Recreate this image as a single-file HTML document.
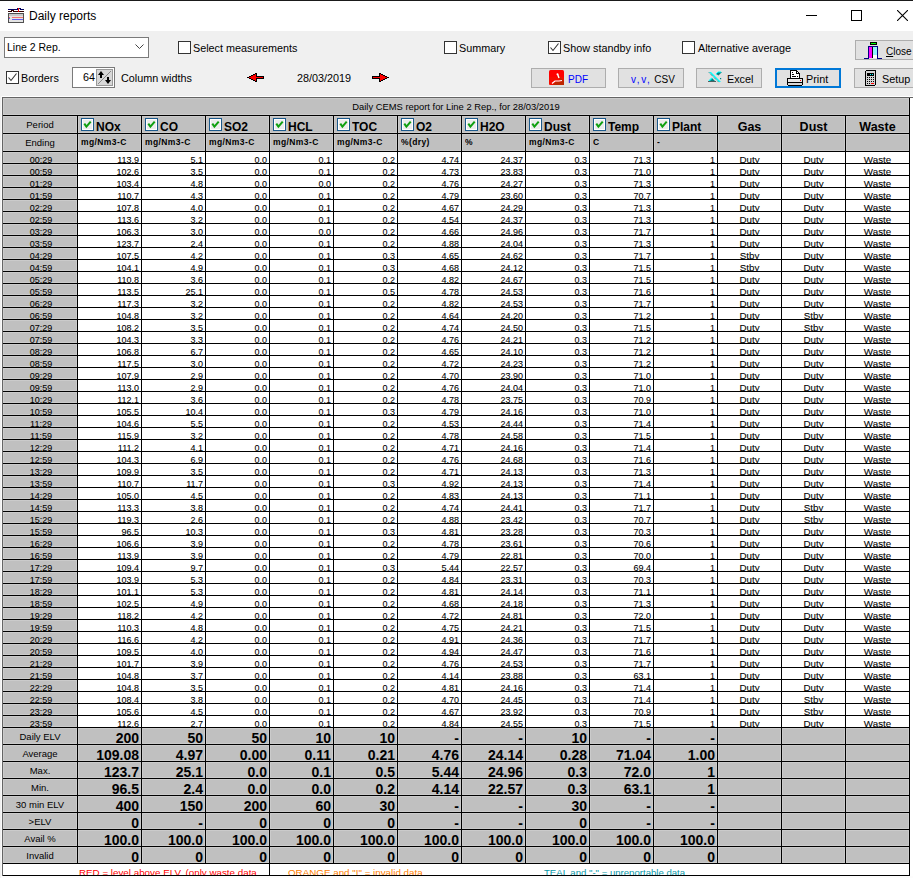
<!DOCTYPE html>
<html><head><meta charset="utf-8"><style>
*{margin:0;padding:0;box-sizing:border-box}
html,body{width:913px;height:878px;overflow:hidden;background:#f0f0f0;font-family:"Liberation Sans",sans-serif;color:#000}
body{position:relative}
svg{display:block}
body>div{position:absolute}
.g{background:#c0c0c0;box-shadow:inset 0 0 0 1px #cbcbcb}
.g2{background:#c0c0c0}
.k{background:#000}
.t{white-space:nowrap;overflow:hidden}
.tt{font-size:9.4px;line-height:18.5px;color:#000}
.hl{font-size:9.5px;line-height:17.2px}
.hb{font-size:12px;font-weight:bold;line-height:22.5px}
.hb2{font-size:12.5px;font-weight:bold;line-height:22.5px}
.un{font-size:8.5px;font-weight:bold;line-height:16.5px;letter-spacing:.4px}
.dr{left:0;width:913px;height:11px;overflow:hidden}
.dr i{position:absolute;top:0;font-style:normal;font-size:9px;line-height:17.6px;white-space:nowrap;-webkit-text-stroke:.08px #000}
.dr i.c{font-size:9.8px;line-height:16.2px}
.sr{left:0;width:913px;height:16px;overflow:hidden}
.sr i{position:absolute;top:0;font-style:normal;white-space:nowrap}
.sr .sl{font-size:9.5px;line-height:18px}
.sr .sv{font-size:14px;font-weight:bold;line-height:20.3px}
.lg{left:0;width:913px;height:11px;overflow:hidden}
.lg i{position:absolute;top:0;font-style:normal;font-size:9.8px;line-height:17px;white-space:nowrap}
.ui{font-size:10.8px;white-space:nowrap}
.btn{background:#e1e1e1;border:1px solid #adadad}

</style></head><body>
<div style="left:0;top:0;width:913px;height:31px;background:#fff"></div>
<div style="left:0;top:0;width:913px;height:1px;background:#1a1a1a"></div>
<!-- app icon -->
<div style="left:8px;top:8px;width:16px;height:15px"><svg width="16" height="15" viewBox="0 0 16 15" shape-rendering="crispEdges"><path d="M0 1.5 H9 V0.5 H12 V1.5 H16" stroke="#000060" fill="none"/><path d="M0 3.5 H3 V2.5 H5 V3.5 H16" stroke="#300000" fill="none"/><rect x="10" y="0" width="1" height="4" fill="#f00"/><rect x="0.5" y="5.5" width="15" height="9" fill="#e4e4e4" stroke="#505050"/><rect x="1" y="6" width="14" height="2" fill="#c8c8c8"/><rect x="4" y="9" width="11" height="1" fill="#f07070"/><rect x="4" y="11" width="11" height="1" fill="#6060f0"/><rect x="1" y="9" width="1" height="1" fill="#f06060"/><rect x="1" y="10" width="1" height="1" fill="#6060f0"/></svg></div>
<div class="ui" style="left:29px;top:9px;font-size:12px;line-height:15px;color:#000">Daily reports</div>
<!-- window buttons -->
<div style="left:806px;top:15px;width:11px;height:1px;background:#000"></div>
<div style="left:851px;top:10px;width:11px;height:11px;border:1px solid #000"></div>
<div style="left:897px;top:10px;width:11px;height:11px"><svg width="11" height="11"><path d="M0 0 L11 11 M11 0 L0 11" stroke="#000" stroke-width="1.1"/></svg></div>
<!-- combo -->
<div style="left:4px;top:37px;width:145px;height:21px;background:#fff;border:1px solid #7a7a7a"></div>
<div class="ui" style="left:7px;top:40px;line-height:15px;font-size:10.5px">Line 2 Rep.</div>
<div style="left:135px;top:44px;width:10px;height:6px"><svg width="10" height="6"><path d="M0.5 0.5 L4.5 4.5 L8.5 0.5" stroke="#444" fill="none"/></svg></div>
<!-- checkboxes row 1 -->
<div style="left:178px;top:41px;width:13px;height:13px;background:#fff;border:1px solid #333"></div>
<div class="ui" style="left:193px;top:41px;line-height:15px">Select measurements</div>
<div style="left:444px;top:41px;width:13px;height:13px;background:#fff;border:1px solid #333"></div>
<div class="ui" style="left:459px;top:41px;line-height:15px">Summary</div>
<div style="left:548px;top:41px;width:13px;height:13px;background:#fff;border:1px solid #333"><svg width="11" height="11" style="position:absolute;left:0;top:0"><path d="M1.5 5.5 L4 8.5 L9.5 1.5" stroke="#333" stroke-width="1.1" fill="none"/></svg></div>
<div class="ui" style="left:563px;top:41px;line-height:15px">Show standby info</div>
<div style="left:682px;top:41px;width:13px;height:13px;background:#fff;border:1px solid #333"></div>
<div class="ui" style="left:698px;top:41px;line-height:15px">Alternative average</div>
<!-- close button -->
<div class="btn" style="left:855px;top:40px;width:70px;height:20px"></div>
<div style="left:864px;top:42px;width:18px;height:17px"><svg width="18" height="17" viewBox="0 0 18 17" shape-rendering="crispEdges"><rect x="6.5" y="0.5" width="6" height="2" fill="#0f0" stroke="#000"/><rect x="5" y="5" width="3" height="11" fill="#ff00ff"/><rect x="8" y="5" width="1" height="11" fill="#000"/><rect x="9" y="5" width="4" height="11" fill="#fff"/><rect x="9" y="5" width="4" height="8" fill="#90f4ff"/><path d="M0 16.5 H4.5 V4.5 H13.5 V16.5 H18" stroke="#000080" fill="none"/></svg></div>
<div class="ui" style="left:886px;top:44px;line-height:15px;font-size:10px"><u>C</u>lose</div>
<!-- row 2 -->
<div style="left:6px;top:71px;width:13px;height:13px;background:#fff;border:1px solid #333"><svg width="11" height="11" style="position:absolute;left:0;top:0"><path d="M1.5 5.5 L4 8.5 L9.5 1.5" stroke="#333" stroke-width="1.1" fill="none"/></svg></div>
<div class="ui" style="left:21px;top:71px;line-height:15px">Borders</div>
<div style="left:72px;top:67px;width:43px;height:21px;background:#fff;border:1px solid #7a7a7a"></div>
<div class="ui" style="left:80px;top:70px;width:15px;text-align:right;line-height:15px">64</div>
<div style="left:96px;top:69px;width:17px;height:17px;background:#d8d8d8;border:1px solid #999"><svg width="15" height="15" style="position:absolute;left:0;top:0"><path d="M14 1 L1 14" stroke="#888"/><path d="M4 1 L1 5 H3 V8 H5 V5 H7 Z" fill="#000"/><path d="M11 14 L8 10 H10 V7 H12 V10 H14 Z" fill="#000"/></svg></div>
<div class="ui" style="left:121px;top:71px;line-height:15px">Column widths</div>
<div style="left:247px;top:73px;width:17px;height:9px"><svg width="17" height="9" viewBox="0 0 17 9" shape-rendering="crispEdges"><path d="M0 4 H2 V3 H4 V2 H6 V1 H8 V0 H10 V3 H17 V6 H10 V9 H8 V8 H6 V7 H4 V6 H2 V5 H0 Z" fill="#000"/><path d="M2 4 H4 V3 H6 V2 H8 V1 H9 V4 H16 V5 H9 V8 H8 V7 H6 V6 H4 V5 H2 Z" fill="#f00"/></svg></div>
<div class="ui" style="left:297px;top:71px;line-height:15px">28/03/2019</div>
<div style="left:372px;top:73px;width:17px;height:9px"><svg width="17" height="9" viewBox="0 0 17 9" style="transform:scaleX(-1)" shape-rendering="crispEdges"><path d="M0 4 H2 V3 H4 V2 H6 V1 H8 V0 H10 V3 H17 V6 H10 V9 H8 V8 H6 V7 H4 V6 H2 V5 H0 Z" fill="#000"/><path d="M2 4 H4 V3 H6 V2 H8 V1 H9 V4 H16 V5 H9 V8 H8 V7 H6 V6 H4 V5 H2 Z" fill="#f00"/></svg></div>
<!-- buttons row 2 -->
<div class="btn" style="left:531px;top:68px;width:75px;height:20px"></div>
<div style="left:549px;top:70px;width:15px;height:15px"><svg width="15" height="15" viewBox="0 0 15 15"><rect x="0" y="0" width="15" height="15" rx="1.5" fill="#f00"/><path d="M4 15 L7 11.5 H15 V15 Z M8 5 L9 5 L15 11 V11.5 H13 Z" fill="#a82a00"/><path d="M0 7 H15 V15 H0 Z" fill="#e42000" opacity=".35"/><path d="M8.7 4.5 L10 8" stroke="#fff" stroke-width="1.4" fill="none"/><circle cx="8.5" cy="4.2" r="1" fill="#fff"/><path d="M3 13.5 L6 11 H10 L13 10.5" stroke="#fff" stroke-width="1.2" fill="none"/></svg></div>
<div class="ui" style="left:568px;top:72px;line-height:15px;color:#0000ff;font-size:10px">PDF</div>
<div class="btn" style="left:618px;top:68px;width:66px;height:20px"></div>
<div class="ui" style="left:631px;top:72px;line-height:15px;font-size:10px"><span style="color:#0000ff;letter-spacing:1.6px">v,v,</span> CSV</div>
<div class="btn" style="left:696px;top:68px;width:66px;height:20px"></div>
<div style="left:708px;top:71px;width:14px;height:12px"><svg width="14" height="12" viewBox="0 0 14 12"><path d="M1 1 H3 L13 11 H11 Z" fill="#00ffff"/><path d="M1 1.5 L11 11.5" stroke="#007070" stroke-width="1" stroke-dasharray="1 1"/><path d="M8 3 L10 1 H14 L10.5 4.5 Z" fill="#008080"/><path d="M8 3 L10 1 H13" stroke="#00ffff" stroke-width="1" fill="none"/><path d="M1 10 L4 7 L7 10 Z" fill="#008080"/><path d="M1 10 L4 7" stroke="#00ffff" stroke-width="1.2"/><rect x="0" y="10" width="8" height="1" fill="#506060"/><rect x="12" y="7" width="1.2" height="1.2" fill="#008080"/></svg></div>
<div class="ui" style="left:727px;top:72px;line-height:15px">Excel</div>
<div style="left:775px;top:68px;width:66px;height:20px;background:#e1e1e1;border:2px solid #0078d7"></div>
<div style="left:787px;top:70px;width:16px;height:16px"><svg width="16" height="16" viewBox="0 0 16 16" shape-rendering="crispEdges"><path d="M3.5 8.5 V0.5 H9.5 L12.5 3.5 V8.5" fill="#fff" stroke="#000"/><path d="M9.5 0.5 V3.5 H12.5" fill="none" stroke="#000"/><rect x="5" y="2" width="1" height="1"/><rect x="5" y="4" width="2" height="1"/><rect x="5" y="6" width="4" height="1"/><rect x="10" y="6" width="1" height="1"/><rect x="0.5" y="8.5" width="15" height="6" fill="#fff" stroke="#000"/><rect x="1" y="9" width="14" height="3" fill="#e8e8e8"/><rect x="13" y="10" width="1" height="1" fill="#f00"/><rect x="0" y="12" width="16" height="1"/><rect x="1" y="13" width="14" height="2" fill="#d8d8d8"/><rect x="1" y="15" width="14" height="1"/></svg></div>
<div class="ui" style="left:806px;top:72px;line-height:15px">Print</div>
<div class="btn" style="left:854px;top:68px;width:70px;height:20px"></div>
<div style="left:865px;top:70px;width:11px;height:16px"><svg width="11" height="16" viewBox="0 0 11 16" shape-rendering="crispEdges"><rect x="0.5" y="0.5" width="10" height="15" rx="1.5" fill="#d4d4d4" stroke="#000"/><rect x="2" y="3" width="7" height="3"/><rect x="5" y="4" width="1" height="1" fill="#0ff"/><rect x="7" y="4" width="1" height="1" fill="#0ff"/><rect x="2" y="7" width="1" height="1"/><rect x="4" y="7" width="1" height="1"/><rect x="6" y="7" width="1" height="1"/><rect x="8" y="7" width="1" height="1"/><rect x="2" y="9" width="1" height="1"/><rect x="4" y="9" width="1" height="1"/><rect x="6" y="9" width="1" height="1"/><rect x="8" y="9" width="1" height="1"/><rect x="2" y="11" width="1" height="1"/><rect x="4" y="11" width="1" height="1"/><rect x="6" y="11" width="1" height="1"/><rect x="8" y="11" width="1" height="1"/><rect x="2" y="13" width="1" height="1"/><rect x="4" y="13" width="1" height="1"/><rect x="6" y="13" width="3" height="1" fill="#f00"/></svg></div>
<div class="ui" style="left:882px;top:72px;line-height:15px">Setup</div>

<div style="left:1px;top:96px;width:912px;height:1px;background:#fff"></div>
<div style="left:1px;top:96px;width:1px;height:782px;background:#fafafa"></div>
<div style="left:2px;top:97px;width:911px;height:1px;background:#646464"></div>
<div style="left:2px;top:97px;width:1px;height:779px;background:#646464"></div>
<div class="g" style="left:3px;top:98px;width:906px;height:17px"></div>
<div class="g" style="left:3px;top:116px;width:74px;height:17px"></div>
<div class="g" style="left:78px;top:116px;width:63px;height:17px"></div>
<div class="g" style="left:142px;top:116px;width:63px;height:17px"></div>
<div class="g" style="left:206px;top:116px;width:63px;height:17px"></div>
<div class="g" style="left:270px;top:116px;width:63px;height:17px"></div>
<div class="g" style="left:334px;top:116px;width:63px;height:17px"></div>
<div class="g" style="left:398px;top:116px;width:63px;height:17px"></div>
<div class="g" style="left:462px;top:116px;width:63px;height:17px"></div>
<div class="g" style="left:526px;top:116px;width:63px;height:17px"></div>
<div class="g" style="left:590px;top:116px;width:63px;height:17px"></div>
<div class="g" style="left:654px;top:116px;width:63px;height:17px"></div>
<div class="g" style="left:718px;top:116px;width:63px;height:17px"></div>
<div class="g" style="left:782px;top:116px;width:63px;height:17px"></div>
<div class="g" style="left:846px;top:116px;width:63px;height:17px"></div>
<div class="g" style="left:3px;top:134px;width:74px;height:17px"></div>
<div class="g" style="left:78px;top:134px;width:63px;height:17px"></div>
<div class="g" style="left:142px;top:134px;width:63px;height:17px"></div>
<div class="g" style="left:206px;top:134px;width:63px;height:17px"></div>
<div class="g" style="left:270px;top:134px;width:63px;height:17px"></div>
<div class="g" style="left:334px;top:134px;width:63px;height:17px"></div>
<div class="g" style="left:398px;top:134px;width:63px;height:17px"></div>
<div class="g" style="left:462px;top:134px;width:63px;height:17px"></div>
<div class="g" style="left:526px;top:134px;width:63px;height:17px"></div>
<div class="g" style="left:590px;top:134px;width:63px;height:17px"></div>
<div class="g" style="left:654px;top:134px;width:63px;height:17px"></div>
<div class="g" style="left:718px;top:134px;width:63px;height:17px"></div>
<div class="g" style="left:782px;top:134px;width:63px;height:17px"></div>
<div class="g" style="left:846px;top:134px;width:63px;height:17px"></div>
<div class="g" style="left:3px;top:152px;width:74px;height:11px"></div>
<div class="g" style="left:3px;top:164px;width:74px;height:11px"></div>
<div class="g" style="left:3px;top:176px;width:74px;height:11px"></div>
<div class="g" style="left:3px;top:188px;width:74px;height:11px"></div>
<div class="g" style="left:3px;top:200px;width:74px;height:11px"></div>
<div class="g" style="left:3px;top:212px;width:74px;height:11px"></div>
<div class="g" style="left:3px;top:224px;width:74px;height:11px"></div>
<div class="g" style="left:3px;top:236px;width:74px;height:11px"></div>
<div class="g" style="left:3px;top:248px;width:74px;height:11px"></div>
<div class="g" style="left:3px;top:260px;width:74px;height:11px"></div>
<div class="g" style="left:3px;top:272px;width:74px;height:11px"></div>
<div class="g" style="left:3px;top:284px;width:74px;height:11px"></div>
<div class="g" style="left:3px;top:296px;width:74px;height:11px"></div>
<div class="g" style="left:3px;top:308px;width:74px;height:11px"></div>
<div class="g" style="left:3px;top:320px;width:74px;height:11px"></div>
<div class="g" style="left:3px;top:332px;width:74px;height:11px"></div>
<div class="g" style="left:3px;top:344px;width:74px;height:11px"></div>
<div class="g" style="left:3px;top:356px;width:74px;height:11px"></div>
<div class="g" style="left:3px;top:368px;width:74px;height:11px"></div>
<div class="g" style="left:3px;top:380px;width:74px;height:11px"></div>
<div class="g" style="left:3px;top:392px;width:74px;height:11px"></div>
<div class="g" style="left:3px;top:404px;width:74px;height:11px"></div>
<div class="g" style="left:3px;top:416px;width:74px;height:11px"></div>
<div class="g" style="left:3px;top:428px;width:74px;height:11px"></div>
<div class="g" style="left:3px;top:440px;width:74px;height:11px"></div>
<div class="g" style="left:3px;top:452px;width:74px;height:11px"></div>
<div class="g" style="left:3px;top:464px;width:74px;height:11px"></div>
<div class="g" style="left:3px;top:476px;width:74px;height:11px"></div>
<div class="g" style="left:3px;top:488px;width:74px;height:11px"></div>
<div class="g" style="left:3px;top:500px;width:74px;height:11px"></div>
<div class="g" style="left:3px;top:512px;width:74px;height:11px"></div>
<div class="g" style="left:3px;top:524px;width:74px;height:11px"></div>
<div class="g" style="left:3px;top:536px;width:74px;height:11px"></div>
<div class="g" style="left:3px;top:548px;width:74px;height:11px"></div>
<div class="g" style="left:3px;top:560px;width:74px;height:11px"></div>
<div class="g" style="left:3px;top:572px;width:74px;height:11px"></div>
<div class="g" style="left:3px;top:584px;width:74px;height:11px"></div>
<div class="g" style="left:3px;top:596px;width:74px;height:11px"></div>
<div class="g" style="left:3px;top:608px;width:74px;height:11px"></div>
<div class="g" style="left:3px;top:620px;width:74px;height:11px"></div>
<div class="g" style="left:3px;top:632px;width:74px;height:11px"></div>
<div class="g" style="left:3px;top:644px;width:74px;height:11px"></div>
<div class="g" style="left:3px;top:656px;width:74px;height:11px"></div>
<div class="g" style="left:3px;top:668px;width:74px;height:11px"></div>
<div class="g" style="left:3px;top:680px;width:74px;height:11px"></div>
<div class="g" style="left:3px;top:692px;width:74px;height:11px"></div>
<div class="g" style="left:3px;top:704px;width:74px;height:11px"></div>
<div class="g" style="left:3px;top:716px;width:74px;height:11px"></div>
<div style="left:78px;top:152px;width:831px;height:575px;background:#fff"></div>
<div class="g" style="left:3px;top:728px;width:74px;height:16px"></div>
<div class="g" style="left:78px;top:728px;width:63px;height:16px"></div>
<div class="g" style="left:142px;top:728px;width:63px;height:16px"></div>
<div class="g" style="left:206px;top:728px;width:63px;height:16px"></div>
<div class="g" style="left:270px;top:728px;width:63px;height:16px"></div>
<div class="g" style="left:334px;top:728px;width:63px;height:16px"></div>
<div class="g" style="left:398px;top:728px;width:63px;height:16px"></div>
<div class="g" style="left:462px;top:728px;width:63px;height:16px"></div>
<div class="g" style="left:526px;top:728px;width:63px;height:16px"></div>
<div class="g" style="left:590px;top:728px;width:63px;height:16px"></div>
<div class="g" style="left:654px;top:728px;width:63px;height:16px"></div>
<div class="g" style="left:718px;top:728px;width:63px;height:16px"></div>
<div class="g" style="left:782px;top:728px;width:63px;height:16px"></div>
<div class="g" style="left:846px;top:728px;width:63px;height:16px"></div>
<div class="g" style="left:3px;top:745px;width:74px;height:16px"></div>
<div class="g" style="left:78px;top:745px;width:63px;height:16px"></div>
<div class="g" style="left:142px;top:745px;width:63px;height:16px"></div>
<div class="g" style="left:206px;top:745px;width:63px;height:16px"></div>
<div class="g" style="left:270px;top:745px;width:63px;height:16px"></div>
<div class="g" style="left:334px;top:745px;width:63px;height:16px"></div>
<div class="g" style="left:398px;top:745px;width:63px;height:16px"></div>
<div class="g" style="left:462px;top:745px;width:63px;height:16px"></div>
<div class="g" style="left:526px;top:745px;width:63px;height:16px"></div>
<div class="g" style="left:590px;top:745px;width:63px;height:16px"></div>
<div class="g" style="left:654px;top:745px;width:63px;height:16px"></div>
<div class="g" style="left:718px;top:745px;width:63px;height:16px"></div>
<div class="g" style="left:782px;top:745px;width:63px;height:16px"></div>
<div class="g" style="left:846px;top:745px;width:63px;height:16px"></div>
<div class="g" style="left:3px;top:762px;width:74px;height:16px"></div>
<div class="g" style="left:78px;top:762px;width:63px;height:16px"></div>
<div class="g" style="left:142px;top:762px;width:63px;height:16px"></div>
<div class="g" style="left:206px;top:762px;width:63px;height:16px"></div>
<div class="g" style="left:270px;top:762px;width:63px;height:16px"></div>
<div class="g" style="left:334px;top:762px;width:63px;height:16px"></div>
<div class="g" style="left:398px;top:762px;width:63px;height:16px"></div>
<div class="g" style="left:462px;top:762px;width:63px;height:16px"></div>
<div class="g" style="left:526px;top:762px;width:63px;height:16px"></div>
<div class="g" style="left:590px;top:762px;width:63px;height:16px"></div>
<div class="g" style="left:654px;top:762px;width:63px;height:16px"></div>
<div class="g" style="left:718px;top:762px;width:63px;height:16px"></div>
<div class="g" style="left:782px;top:762px;width:63px;height:16px"></div>
<div class="g" style="left:846px;top:762px;width:63px;height:16px"></div>
<div class="g" style="left:3px;top:779px;width:74px;height:16px"></div>
<div class="g" style="left:78px;top:779px;width:63px;height:16px"></div>
<div class="g" style="left:142px;top:779px;width:63px;height:16px"></div>
<div class="g" style="left:206px;top:779px;width:63px;height:16px"></div>
<div class="g" style="left:270px;top:779px;width:63px;height:16px"></div>
<div class="g" style="left:334px;top:779px;width:63px;height:16px"></div>
<div class="g" style="left:398px;top:779px;width:63px;height:16px"></div>
<div class="g" style="left:462px;top:779px;width:63px;height:16px"></div>
<div class="g" style="left:526px;top:779px;width:63px;height:16px"></div>
<div class="g" style="left:590px;top:779px;width:63px;height:16px"></div>
<div class="g" style="left:654px;top:779px;width:63px;height:16px"></div>
<div class="g" style="left:718px;top:779px;width:63px;height:16px"></div>
<div class="g" style="left:782px;top:779px;width:63px;height:16px"></div>
<div class="g" style="left:846px;top:779px;width:63px;height:16px"></div>
<div class="g" style="left:3px;top:796px;width:74px;height:16px"></div>
<div class="g" style="left:78px;top:796px;width:63px;height:16px"></div>
<div class="g" style="left:142px;top:796px;width:63px;height:16px"></div>
<div class="g" style="left:206px;top:796px;width:63px;height:16px"></div>
<div class="g" style="left:270px;top:796px;width:63px;height:16px"></div>
<div class="g" style="left:334px;top:796px;width:63px;height:16px"></div>
<div class="g" style="left:398px;top:796px;width:63px;height:16px"></div>
<div class="g" style="left:462px;top:796px;width:63px;height:16px"></div>
<div class="g" style="left:526px;top:796px;width:63px;height:16px"></div>
<div class="g" style="left:590px;top:796px;width:63px;height:16px"></div>
<div class="g" style="left:654px;top:796px;width:63px;height:16px"></div>
<div class="g" style="left:718px;top:796px;width:63px;height:16px"></div>
<div class="g" style="left:782px;top:796px;width:63px;height:16px"></div>
<div class="g" style="left:846px;top:796px;width:63px;height:16px"></div>
<div class="g" style="left:3px;top:813px;width:74px;height:16px"></div>
<div class="g" style="left:78px;top:813px;width:63px;height:16px"></div>
<div class="g" style="left:142px;top:813px;width:63px;height:16px"></div>
<div class="g" style="left:206px;top:813px;width:63px;height:16px"></div>
<div class="g" style="left:270px;top:813px;width:63px;height:16px"></div>
<div class="g" style="left:334px;top:813px;width:63px;height:16px"></div>
<div class="g" style="left:398px;top:813px;width:63px;height:16px"></div>
<div class="g" style="left:462px;top:813px;width:63px;height:16px"></div>
<div class="g" style="left:526px;top:813px;width:63px;height:16px"></div>
<div class="g" style="left:590px;top:813px;width:63px;height:16px"></div>
<div class="g" style="left:654px;top:813px;width:63px;height:16px"></div>
<div class="g" style="left:718px;top:813px;width:63px;height:16px"></div>
<div class="g" style="left:782px;top:813px;width:63px;height:16px"></div>
<div class="g" style="left:846px;top:813px;width:63px;height:16px"></div>
<div class="g" style="left:3px;top:830px;width:74px;height:16px"></div>
<div class="g" style="left:78px;top:830px;width:63px;height:16px"></div>
<div class="g" style="left:142px;top:830px;width:63px;height:16px"></div>
<div class="g" style="left:206px;top:830px;width:63px;height:16px"></div>
<div class="g" style="left:270px;top:830px;width:63px;height:16px"></div>
<div class="g" style="left:334px;top:830px;width:63px;height:16px"></div>
<div class="g" style="left:398px;top:830px;width:63px;height:16px"></div>
<div class="g" style="left:462px;top:830px;width:63px;height:16px"></div>
<div class="g" style="left:526px;top:830px;width:63px;height:16px"></div>
<div class="g" style="left:590px;top:830px;width:63px;height:16px"></div>
<div class="g" style="left:654px;top:830px;width:63px;height:16px"></div>
<div class="g" style="left:718px;top:830px;width:63px;height:16px"></div>
<div class="g" style="left:782px;top:830px;width:63px;height:16px"></div>
<div class="g" style="left:846px;top:830px;width:63px;height:16px"></div>
<div class="g" style="left:3px;top:847px;width:74px;height:16px"></div>
<div class="g" style="left:78px;top:847px;width:63px;height:16px"></div>
<div class="g" style="left:142px;top:847px;width:63px;height:16px"></div>
<div class="g" style="left:206px;top:847px;width:63px;height:16px"></div>
<div class="g" style="left:270px;top:847px;width:63px;height:16px"></div>
<div class="g" style="left:334px;top:847px;width:63px;height:16px"></div>
<div class="g" style="left:398px;top:847px;width:63px;height:16px"></div>
<div class="g" style="left:462px;top:847px;width:63px;height:16px"></div>
<div class="g" style="left:526px;top:847px;width:63px;height:16px"></div>
<div class="g" style="left:590px;top:847px;width:63px;height:16px"></div>
<div class="g" style="left:654px;top:847px;width:63px;height:16px"></div>
<div class="g" style="left:718px;top:847px;width:63px;height:16px"></div>
<div class="g" style="left:782px;top:847px;width:63px;height:16px"></div>
<div class="g" style="left:846px;top:847px;width:63px;height:16px"></div>
<div style="left:3px;top:864px;width:906px;height:11px;background:#fff"></div>
<div style="left:910px;top:98px;width:3px;height:780px;background:#fff"></div>
<div style="left:2px;top:876px;width:911px;height:2px;background:#fcfcfc"></div>
<div class="k" style="left:3px;top:115px;width:907px;height:1px"></div>
<div class="k" style="left:3px;top:133px;width:907px;height:1px"></div>
<div class="k" style="left:3px;top:151px;width:907px;height:1px"></div>
<div class="k" style="left:3px;top:163px;width:907px;height:1px"></div>
<div class="k" style="left:3px;top:175px;width:907px;height:1px"></div>
<div class="k" style="left:3px;top:187px;width:907px;height:1px"></div>
<div class="k" style="left:3px;top:199px;width:907px;height:1px"></div>
<div class="k" style="left:3px;top:211px;width:907px;height:1px"></div>
<div class="k" style="left:3px;top:223px;width:907px;height:1px"></div>
<div class="k" style="left:3px;top:235px;width:907px;height:1px"></div>
<div class="k" style="left:3px;top:247px;width:907px;height:1px"></div>
<div class="k" style="left:3px;top:259px;width:907px;height:1px"></div>
<div class="k" style="left:3px;top:271px;width:907px;height:1px"></div>
<div class="k" style="left:3px;top:283px;width:907px;height:1px"></div>
<div class="k" style="left:3px;top:295px;width:907px;height:1px"></div>
<div class="k" style="left:3px;top:307px;width:907px;height:1px"></div>
<div class="k" style="left:3px;top:319px;width:907px;height:1px"></div>
<div class="k" style="left:3px;top:331px;width:907px;height:1px"></div>
<div class="k" style="left:3px;top:343px;width:907px;height:1px"></div>
<div class="k" style="left:3px;top:355px;width:907px;height:1px"></div>
<div class="k" style="left:3px;top:367px;width:907px;height:1px"></div>
<div class="k" style="left:3px;top:379px;width:907px;height:1px"></div>
<div class="k" style="left:3px;top:391px;width:907px;height:1px"></div>
<div class="k" style="left:3px;top:403px;width:907px;height:1px"></div>
<div class="k" style="left:3px;top:415px;width:907px;height:1px"></div>
<div class="k" style="left:3px;top:427px;width:907px;height:1px"></div>
<div class="k" style="left:3px;top:439px;width:907px;height:1px"></div>
<div class="k" style="left:3px;top:451px;width:907px;height:1px"></div>
<div class="k" style="left:3px;top:463px;width:907px;height:1px"></div>
<div class="k" style="left:3px;top:475px;width:907px;height:1px"></div>
<div class="k" style="left:3px;top:487px;width:907px;height:1px"></div>
<div class="k" style="left:3px;top:499px;width:907px;height:1px"></div>
<div class="k" style="left:3px;top:511px;width:907px;height:1px"></div>
<div class="k" style="left:3px;top:523px;width:907px;height:1px"></div>
<div class="k" style="left:3px;top:535px;width:907px;height:1px"></div>
<div class="k" style="left:3px;top:547px;width:907px;height:1px"></div>
<div class="k" style="left:3px;top:559px;width:907px;height:1px"></div>
<div class="k" style="left:3px;top:571px;width:907px;height:1px"></div>
<div class="k" style="left:3px;top:583px;width:907px;height:1px"></div>
<div class="k" style="left:3px;top:595px;width:907px;height:1px"></div>
<div class="k" style="left:3px;top:607px;width:907px;height:1px"></div>
<div class="k" style="left:3px;top:619px;width:907px;height:1px"></div>
<div class="k" style="left:3px;top:631px;width:907px;height:1px"></div>
<div class="k" style="left:3px;top:643px;width:907px;height:1px"></div>
<div class="k" style="left:3px;top:655px;width:907px;height:1px"></div>
<div class="k" style="left:3px;top:667px;width:907px;height:1px"></div>
<div class="k" style="left:3px;top:679px;width:907px;height:1px"></div>
<div class="k" style="left:3px;top:691px;width:907px;height:1px"></div>
<div class="k" style="left:3px;top:703px;width:907px;height:1px"></div>
<div class="k" style="left:3px;top:715px;width:907px;height:1px"></div>
<div class="k" style="left:3px;top:727px;width:907px;height:1px"></div>
<div class="k" style="left:3px;top:744px;width:907px;height:1px"></div>
<div class="k" style="left:3px;top:761px;width:907px;height:1px"></div>
<div class="k" style="left:3px;top:778px;width:907px;height:1px"></div>
<div class="k" style="left:3px;top:795px;width:907px;height:1px"></div>
<div class="k" style="left:3px;top:812px;width:907px;height:1px"></div>
<div class="k" style="left:3px;top:829px;width:907px;height:1px"></div>
<div class="k" style="left:3px;top:846px;width:907px;height:1px"></div>
<div class="k" style="left:3px;top:863px;width:907px;height:1px"></div>
<div class="k" style="left:3px;top:875px;width:907px;height:1px"></div>
<div class="k" style="left:77px;top:116px;width:1px;height:747px"></div>
<div class="k" style="left:141px;top:116px;width:1px;height:747px"></div>
<div class="k" style="left:205px;top:116px;width:1px;height:747px"></div>
<div class="k" style="left:269px;top:116px;width:1px;height:747px"></div>
<div class="k" style="left:333px;top:116px;width:1px;height:747px"></div>
<div class="k" style="left:397px;top:116px;width:1px;height:747px"></div>
<div class="k" style="left:461px;top:116px;width:1px;height:747px"></div>
<div class="k" style="left:525px;top:116px;width:1px;height:747px"></div>
<div class="k" style="left:589px;top:116px;width:1px;height:747px"></div>
<div class="k" style="left:653px;top:116px;width:1px;height:747px"></div>
<div class="k" style="left:717px;top:116px;width:1px;height:747px"></div>
<div class="k" style="left:781px;top:116px;width:1px;height:747px"></div>
<div class="k" style="left:845px;top:116px;width:1px;height:747px"></div>
<div class="k" style="left:909px;top:98px;width:1px;height:778px"></div>
<div class="k" style="left:269px;top:864px;width:1px;height:11px"></div>
<div class="t tt" style="left:3px;top:98px;width:906px;height:17px;text-align:center">Daily CEMS report for Line 2 Rep., for 28/03/2019</div>
<div class="t hl" style="left:3px;top:116px;width:74px;height:17px;text-align:center">Period</div>
<div class="t hl" style="left:3px;top:134px;width:74px;height:17px;text-align:center">Ending</div>
<div style="left:81px;top:118px;width:13px;height:13px"><svg width="13" height="13" style="position:absolute;left:0;top:0"><rect x="0.5" y="0.5" width="12" height="12" fill="#fff" stroke="#1c5a8c"/><rect x="1.5" y="1.5" width="10" height="10" fill="#ececec" stroke="#fff"/><path d="M3.3 5.6 L5.4 8.6 L9.7 3.6" stroke="#10a010" stroke-width="2" fill="none"/></svg></div>
<div class="t hb" style="left:96px;top:116px;width:44px;height:17px">NOx</div>
<div class="t un" style="left:81px;top:134px;width:60px;height:17px">mg/Nm3-C</div>
<div style="left:145px;top:118px;width:13px;height:13px"><svg width="13" height="13" style="position:absolute;left:0;top:0"><rect x="0.5" y="0.5" width="12" height="12" fill="#fff" stroke="#1c5a8c"/><rect x="1.5" y="1.5" width="10" height="10" fill="#ececec" stroke="#fff"/><path d="M3.3 5.6 L5.4 8.6 L9.7 3.6" stroke="#10a010" stroke-width="2" fill="none"/></svg></div>
<div class="t hb" style="left:160px;top:116px;width:44px;height:17px">CO</div>
<div class="t un" style="left:145px;top:134px;width:60px;height:17px">mg/Nm3-C</div>
<div style="left:209px;top:118px;width:13px;height:13px"><svg width="13" height="13" style="position:absolute;left:0;top:0"><rect x="0.5" y="0.5" width="12" height="12" fill="#fff" stroke="#1c5a8c"/><rect x="1.5" y="1.5" width="10" height="10" fill="#ececec" stroke="#fff"/><path d="M3.3 5.6 L5.4 8.6 L9.7 3.6" stroke="#10a010" stroke-width="2" fill="none"/></svg></div>
<div class="t hb" style="left:224px;top:116px;width:44px;height:17px">SO2</div>
<div class="t un" style="left:209px;top:134px;width:60px;height:17px">mg/Nm3-C</div>
<div style="left:273px;top:118px;width:13px;height:13px"><svg width="13" height="13" style="position:absolute;left:0;top:0"><rect x="0.5" y="0.5" width="12" height="12" fill="#fff" stroke="#1c5a8c"/><rect x="1.5" y="1.5" width="10" height="10" fill="#ececec" stroke="#fff"/><path d="M3.3 5.6 L5.4 8.6 L9.7 3.6" stroke="#10a010" stroke-width="2" fill="none"/></svg></div>
<div class="t hb" style="left:288px;top:116px;width:44px;height:17px">HCL</div>
<div class="t un" style="left:273px;top:134px;width:60px;height:17px">mg/Nm3-C</div>
<div style="left:337px;top:118px;width:13px;height:13px"><svg width="13" height="13" style="position:absolute;left:0;top:0"><rect x="0.5" y="0.5" width="12" height="12" fill="#fff" stroke="#1c5a8c"/><rect x="1.5" y="1.5" width="10" height="10" fill="#ececec" stroke="#fff"/><path d="M3.3 5.6 L5.4 8.6 L9.7 3.6" stroke="#10a010" stroke-width="2" fill="none"/></svg></div>
<div class="t hb" style="left:352px;top:116px;width:44px;height:17px">TOC</div>
<div class="t un" style="left:337px;top:134px;width:60px;height:17px">mg/Nm3-C</div>
<div style="left:401px;top:118px;width:13px;height:13px"><svg width="13" height="13" style="position:absolute;left:0;top:0"><rect x="0.5" y="0.5" width="12" height="12" fill="#fff" stroke="#1c5a8c"/><rect x="1.5" y="1.5" width="10" height="10" fill="#ececec" stroke="#fff"/><path d="M3.3 5.6 L5.4 8.6 L9.7 3.6" stroke="#10a010" stroke-width="2" fill="none"/></svg></div>
<div class="t hb" style="left:416px;top:116px;width:44px;height:17px">O2</div>
<div class="t un" style="left:401px;top:134px;width:60px;height:17px">%(dry)</div>
<div style="left:465px;top:118px;width:13px;height:13px"><svg width="13" height="13" style="position:absolute;left:0;top:0"><rect x="0.5" y="0.5" width="12" height="12" fill="#fff" stroke="#1c5a8c"/><rect x="1.5" y="1.5" width="10" height="10" fill="#ececec" stroke="#fff"/><path d="M3.3 5.6 L5.4 8.6 L9.7 3.6" stroke="#10a010" stroke-width="2" fill="none"/></svg></div>
<div class="t hb" style="left:480px;top:116px;width:44px;height:17px">H2O</div>
<div class="t un" style="left:465px;top:134px;width:60px;height:17px">%</div>
<div style="left:529px;top:118px;width:13px;height:13px"><svg width="13" height="13" style="position:absolute;left:0;top:0"><rect x="0.5" y="0.5" width="12" height="12" fill="#fff" stroke="#1c5a8c"/><rect x="1.5" y="1.5" width="10" height="10" fill="#ececec" stroke="#fff"/><path d="M3.3 5.6 L5.4 8.6 L9.7 3.6" stroke="#10a010" stroke-width="2" fill="none"/></svg></div>
<div class="t hb" style="left:544px;top:116px;width:44px;height:17px">Dust</div>
<div class="t un" style="left:529px;top:134px;width:60px;height:17px">mg/Nm3-C</div>
<div style="left:593px;top:118px;width:13px;height:13px"><svg width="13" height="13" style="position:absolute;left:0;top:0"><rect x="0.5" y="0.5" width="12" height="12" fill="#fff" stroke="#1c5a8c"/><rect x="1.5" y="1.5" width="10" height="10" fill="#ececec" stroke="#fff"/><path d="M3.3 5.6 L5.4 8.6 L9.7 3.6" stroke="#10a010" stroke-width="2" fill="none"/></svg></div>
<div class="t hb" style="left:608px;top:116px;width:44px;height:17px">Temp</div>
<div class="t un" style="left:593px;top:134px;width:60px;height:17px">C</div>
<div style="left:657px;top:118px;width:13px;height:13px"><svg width="13" height="13" style="position:absolute;left:0;top:0"><rect x="0.5" y="0.5" width="12" height="12" fill="#fff" stroke="#1c5a8c"/><rect x="1.5" y="1.5" width="10" height="10" fill="#ececec" stroke="#fff"/><path d="M3.3 5.6 L5.4 8.6 L9.7 3.6" stroke="#10a010" stroke-width="2" fill="none"/></svg></div>
<div class="t hb" style="left:672px;top:116px;width:44px;height:17px">Plant</div>
<div class="t un" style="left:657px;top:134px;width:60px;height:17px">-</div>
<div class="t hb2" style="left:718px;top:116px;width:63px;height:17px;text-align:center">Gas</div>
<div class="t hb2" style="left:782px;top:116px;width:63px;height:17px;text-align:center">Dust</div>
<div class="t hb2" style="left:846px;top:116px;width:63px;height:17px;text-align:center">Waste</div>
<div class="dr" style="top:152px"><i style="left:4px;width:74px;text-align:center">00:29</i><i style="left:78px;width:61px;text-align:right">113.9</i><i style="left:142px;width:61px;text-align:right">5.1</i><i style="left:206px;width:61px;text-align:right">0.0</i><i style="left:270px;width:61px;text-align:right">0.1</i><i style="left:334px;width:61px;text-align:right">0.2</i><i style="left:398px;width:61px;text-align:right">4.74</i><i style="left:462px;width:61px;text-align:right">24.37</i><i style="left:526px;width:61px;text-align:right">0.3</i><i style="left:590px;width:61px;text-align:right">71.3</i><i style="left:654px;width:61px;text-align:right">1</i><i class="c" style="left:718px;width:63px;text-align:center">Duty</i><i class="c" style="left:782px;width:63px;text-align:center">Duty</i><i class="c" style="left:846px;width:63px;text-align:center">Waste</i></div>
<div class="dr" style="top:164px"><i style="left:4px;width:74px;text-align:center">00:59</i><i style="left:78px;width:61px;text-align:right">102.6</i><i style="left:142px;width:61px;text-align:right">3.5</i><i style="left:206px;width:61px;text-align:right">0.0</i><i style="left:270px;width:61px;text-align:right">0.1</i><i style="left:334px;width:61px;text-align:right">0.2</i><i style="left:398px;width:61px;text-align:right">4.73</i><i style="left:462px;width:61px;text-align:right">23.83</i><i style="left:526px;width:61px;text-align:right">0.3</i><i style="left:590px;width:61px;text-align:right">71.0</i><i style="left:654px;width:61px;text-align:right">1</i><i class="c" style="left:718px;width:63px;text-align:center">Duty</i><i class="c" style="left:782px;width:63px;text-align:center">Duty</i><i class="c" style="left:846px;width:63px;text-align:center">Waste</i></div>
<div class="dr" style="top:176px"><i style="left:4px;width:74px;text-align:center">01:29</i><i style="left:78px;width:61px;text-align:right">103.4</i><i style="left:142px;width:61px;text-align:right">4.8</i><i style="left:206px;width:61px;text-align:right">0.0</i><i style="left:270px;width:61px;text-align:right">0.0</i><i style="left:334px;width:61px;text-align:right">0.2</i><i style="left:398px;width:61px;text-align:right">4.76</i><i style="left:462px;width:61px;text-align:right">24.27</i><i style="left:526px;width:61px;text-align:right">0.3</i><i style="left:590px;width:61px;text-align:right">71.3</i><i style="left:654px;width:61px;text-align:right">1</i><i class="c" style="left:718px;width:63px;text-align:center">Duty</i><i class="c" style="left:782px;width:63px;text-align:center">Duty</i><i class="c" style="left:846px;width:63px;text-align:center">Waste</i></div>
<div class="dr" style="top:188px"><i style="left:4px;width:74px;text-align:center">01:59</i><i style="left:78px;width:61px;text-align:right">110.7</i><i style="left:142px;width:61px;text-align:right">4.3</i><i style="left:206px;width:61px;text-align:right">0.0</i><i style="left:270px;width:61px;text-align:right">0.1</i><i style="left:334px;width:61px;text-align:right">0.2</i><i style="left:398px;width:61px;text-align:right">4.79</i><i style="left:462px;width:61px;text-align:right">23.60</i><i style="left:526px;width:61px;text-align:right">0.3</i><i style="left:590px;width:61px;text-align:right">70.7</i><i style="left:654px;width:61px;text-align:right">1</i><i class="c" style="left:718px;width:63px;text-align:center">Duty</i><i class="c" style="left:782px;width:63px;text-align:center">Duty</i><i class="c" style="left:846px;width:63px;text-align:center">Waste</i></div>
<div class="dr" style="top:200px"><i style="left:4px;width:74px;text-align:center">02:29</i><i style="left:78px;width:61px;text-align:right">107.8</i><i style="left:142px;width:61px;text-align:right">4.0</i><i style="left:206px;width:61px;text-align:right">0.0</i><i style="left:270px;width:61px;text-align:right">0.1</i><i style="left:334px;width:61px;text-align:right">0.2</i><i style="left:398px;width:61px;text-align:right">4.67</i><i style="left:462px;width:61px;text-align:right">24.29</i><i style="left:526px;width:61px;text-align:right">0.3</i><i style="left:590px;width:61px;text-align:right">71.3</i><i style="left:654px;width:61px;text-align:right">1</i><i class="c" style="left:718px;width:63px;text-align:center">Duty</i><i class="c" style="left:782px;width:63px;text-align:center">Duty</i><i class="c" style="left:846px;width:63px;text-align:center">Waste</i></div>
<div class="dr" style="top:212px"><i style="left:4px;width:74px;text-align:center">02:59</i><i style="left:78px;width:61px;text-align:right">113.6</i><i style="left:142px;width:61px;text-align:right">3.2</i><i style="left:206px;width:61px;text-align:right">0.0</i><i style="left:270px;width:61px;text-align:right">0.1</i><i style="left:334px;width:61px;text-align:right">0.2</i><i style="left:398px;width:61px;text-align:right">4.54</i><i style="left:462px;width:61px;text-align:right">24.37</i><i style="left:526px;width:61px;text-align:right">0.3</i><i style="left:590px;width:61px;text-align:right">71.3</i><i style="left:654px;width:61px;text-align:right">1</i><i class="c" style="left:718px;width:63px;text-align:center">Duty</i><i class="c" style="left:782px;width:63px;text-align:center">Duty</i><i class="c" style="left:846px;width:63px;text-align:center">Waste</i></div>
<div class="dr" style="top:224px"><i style="left:4px;width:74px;text-align:center">03:29</i><i style="left:78px;width:61px;text-align:right">106.3</i><i style="left:142px;width:61px;text-align:right">3.0</i><i style="left:206px;width:61px;text-align:right">0.0</i><i style="left:270px;width:61px;text-align:right">0.0</i><i style="left:334px;width:61px;text-align:right">0.2</i><i style="left:398px;width:61px;text-align:right">4.66</i><i style="left:462px;width:61px;text-align:right">24.96</i><i style="left:526px;width:61px;text-align:right">0.3</i><i style="left:590px;width:61px;text-align:right">71.7</i><i style="left:654px;width:61px;text-align:right">1</i><i class="c" style="left:718px;width:63px;text-align:center">Duty</i><i class="c" style="left:782px;width:63px;text-align:center">Duty</i><i class="c" style="left:846px;width:63px;text-align:center">Waste</i></div>
<div class="dr" style="top:236px"><i style="left:4px;width:74px;text-align:center">03:59</i><i style="left:78px;width:61px;text-align:right">123.7</i><i style="left:142px;width:61px;text-align:right">2.4</i><i style="left:206px;width:61px;text-align:right">0.0</i><i style="left:270px;width:61px;text-align:right">0.1</i><i style="left:334px;width:61px;text-align:right">0.2</i><i style="left:398px;width:61px;text-align:right">4.88</i><i style="left:462px;width:61px;text-align:right">24.04</i><i style="left:526px;width:61px;text-align:right">0.3</i><i style="left:590px;width:61px;text-align:right">71.3</i><i style="left:654px;width:61px;text-align:right">1</i><i class="c" style="left:718px;width:63px;text-align:center">Duty</i><i class="c" style="left:782px;width:63px;text-align:center">Duty</i><i class="c" style="left:846px;width:63px;text-align:center">Waste</i></div>
<div class="dr" style="top:248px"><i style="left:4px;width:74px;text-align:center">04:29</i><i style="left:78px;width:61px;text-align:right">107.5</i><i style="left:142px;width:61px;text-align:right">4.2</i><i style="left:206px;width:61px;text-align:right">0.0</i><i style="left:270px;width:61px;text-align:right">0.1</i><i style="left:334px;width:61px;text-align:right">0.3</i><i style="left:398px;width:61px;text-align:right">4.65</i><i style="left:462px;width:61px;text-align:right">24.62</i><i style="left:526px;width:61px;text-align:right">0.3</i><i style="left:590px;width:61px;text-align:right">71.7</i><i style="left:654px;width:61px;text-align:right">1</i><i class="c" style="left:718px;width:63px;text-align:center">Stby</i><i class="c" style="left:782px;width:63px;text-align:center">Duty</i><i class="c" style="left:846px;width:63px;text-align:center">Waste</i></div>
<div class="dr" style="top:260px"><i style="left:4px;width:74px;text-align:center">04:59</i><i style="left:78px;width:61px;text-align:right">104.1</i><i style="left:142px;width:61px;text-align:right">4.9</i><i style="left:206px;width:61px;text-align:right">0.0</i><i style="left:270px;width:61px;text-align:right">0.1</i><i style="left:334px;width:61px;text-align:right">0.3</i><i style="left:398px;width:61px;text-align:right">4.68</i><i style="left:462px;width:61px;text-align:right">24.12</i><i style="left:526px;width:61px;text-align:right">0.3</i><i style="left:590px;width:61px;text-align:right">71.5</i><i style="left:654px;width:61px;text-align:right">1</i><i class="c" style="left:718px;width:63px;text-align:center">Stby</i><i class="c" style="left:782px;width:63px;text-align:center">Duty</i><i class="c" style="left:846px;width:63px;text-align:center">Waste</i></div>
<div class="dr" style="top:272px"><i style="left:4px;width:74px;text-align:center">05:29</i><i style="left:78px;width:61px;text-align:right">110.8</i><i style="left:142px;width:61px;text-align:right">3.6</i><i style="left:206px;width:61px;text-align:right">0.0</i><i style="left:270px;width:61px;text-align:right">0.1</i><i style="left:334px;width:61px;text-align:right">0.2</i><i style="left:398px;width:61px;text-align:right">4.82</i><i style="left:462px;width:61px;text-align:right">24.67</i><i style="left:526px;width:61px;text-align:right">0.3</i><i style="left:590px;width:61px;text-align:right">71.5</i><i style="left:654px;width:61px;text-align:right">1</i><i class="c" style="left:718px;width:63px;text-align:center">Duty</i><i class="c" style="left:782px;width:63px;text-align:center">Duty</i><i class="c" style="left:846px;width:63px;text-align:center">Waste</i></div>
<div class="dr" style="top:284px"><i style="left:4px;width:74px;text-align:center">05:59</i><i style="left:78px;width:61px;text-align:right">113.5</i><i style="left:142px;width:61px;text-align:right">25.1</i><i style="left:206px;width:61px;text-align:right">0.0</i><i style="left:270px;width:61px;text-align:right">0.1</i><i style="left:334px;width:61px;text-align:right">0.5</i><i style="left:398px;width:61px;text-align:right">4.78</i><i style="left:462px;width:61px;text-align:right">24.53</i><i style="left:526px;width:61px;text-align:right">0.3</i><i style="left:590px;width:61px;text-align:right">71.6</i><i style="left:654px;width:61px;text-align:right">1</i><i class="c" style="left:718px;width:63px;text-align:center">Duty</i><i class="c" style="left:782px;width:63px;text-align:center">Duty</i><i class="c" style="left:846px;width:63px;text-align:center">Waste</i></div>
<div class="dr" style="top:296px"><i style="left:4px;width:74px;text-align:center">06:29</i><i style="left:78px;width:61px;text-align:right">117.3</i><i style="left:142px;width:61px;text-align:right">3.2</i><i style="left:206px;width:61px;text-align:right">0.0</i><i style="left:270px;width:61px;text-align:right">0.1</i><i style="left:334px;width:61px;text-align:right">0.2</i><i style="left:398px;width:61px;text-align:right">4.82</i><i style="left:462px;width:61px;text-align:right">24.53</i><i style="left:526px;width:61px;text-align:right">0.3</i><i style="left:590px;width:61px;text-align:right">71.7</i><i style="left:654px;width:61px;text-align:right">1</i><i class="c" style="left:718px;width:63px;text-align:center">Duty</i><i class="c" style="left:782px;width:63px;text-align:center">Duty</i><i class="c" style="left:846px;width:63px;text-align:center">Waste</i></div>
<div class="dr" style="top:308px"><i style="left:4px;width:74px;text-align:center">06:59</i><i style="left:78px;width:61px;text-align:right">104.8</i><i style="left:142px;width:61px;text-align:right">3.2</i><i style="left:206px;width:61px;text-align:right">0.0</i><i style="left:270px;width:61px;text-align:right">0.1</i><i style="left:334px;width:61px;text-align:right">0.2</i><i style="left:398px;width:61px;text-align:right">4.64</i><i style="left:462px;width:61px;text-align:right">24.20</i><i style="left:526px;width:61px;text-align:right">0.3</i><i style="left:590px;width:61px;text-align:right">71.2</i><i style="left:654px;width:61px;text-align:right">1</i><i class="c" style="left:718px;width:63px;text-align:center">Duty</i><i class="c" style="left:782px;width:63px;text-align:center">Stby</i><i class="c" style="left:846px;width:63px;text-align:center">Waste</i></div>
<div class="dr" style="top:320px"><i style="left:4px;width:74px;text-align:center">07:29</i><i style="left:78px;width:61px;text-align:right">108.2</i><i style="left:142px;width:61px;text-align:right">3.5</i><i style="left:206px;width:61px;text-align:right">0.0</i><i style="left:270px;width:61px;text-align:right">0.1</i><i style="left:334px;width:61px;text-align:right">0.2</i><i style="left:398px;width:61px;text-align:right">4.74</i><i style="left:462px;width:61px;text-align:right">24.50</i><i style="left:526px;width:61px;text-align:right">0.3</i><i style="left:590px;width:61px;text-align:right">71.5</i><i style="left:654px;width:61px;text-align:right">1</i><i class="c" style="left:718px;width:63px;text-align:center">Duty</i><i class="c" style="left:782px;width:63px;text-align:center">Stby</i><i class="c" style="left:846px;width:63px;text-align:center">Waste</i></div>
<div class="dr" style="top:332px"><i style="left:4px;width:74px;text-align:center">07:59</i><i style="left:78px;width:61px;text-align:right">104.3</i><i style="left:142px;width:61px;text-align:right">3.3</i><i style="left:206px;width:61px;text-align:right">0.0</i><i style="left:270px;width:61px;text-align:right">0.1</i><i style="left:334px;width:61px;text-align:right">0.2</i><i style="left:398px;width:61px;text-align:right">4.76</i><i style="left:462px;width:61px;text-align:right">24.21</i><i style="left:526px;width:61px;text-align:right">0.3</i><i style="left:590px;width:61px;text-align:right">71.2</i><i style="left:654px;width:61px;text-align:right">1</i><i class="c" style="left:718px;width:63px;text-align:center">Duty</i><i class="c" style="left:782px;width:63px;text-align:center">Duty</i><i class="c" style="left:846px;width:63px;text-align:center">Waste</i></div>
<div class="dr" style="top:344px"><i style="left:4px;width:74px;text-align:center">08:29</i><i style="left:78px;width:61px;text-align:right">106.8</i><i style="left:142px;width:61px;text-align:right">6.7</i><i style="left:206px;width:61px;text-align:right">0.0</i><i style="left:270px;width:61px;text-align:right">0.1</i><i style="left:334px;width:61px;text-align:right">0.2</i><i style="left:398px;width:61px;text-align:right">4.65</i><i style="left:462px;width:61px;text-align:right">24.10</i><i style="left:526px;width:61px;text-align:right">0.3</i><i style="left:590px;width:61px;text-align:right">71.2</i><i style="left:654px;width:61px;text-align:right">1</i><i class="c" style="left:718px;width:63px;text-align:center">Duty</i><i class="c" style="left:782px;width:63px;text-align:center">Duty</i><i class="c" style="left:846px;width:63px;text-align:center">Waste</i></div>
<div class="dr" style="top:356px"><i style="left:4px;width:74px;text-align:center">08:59</i><i style="left:78px;width:61px;text-align:right">117.5</i><i style="left:142px;width:61px;text-align:right">3.0</i><i style="left:206px;width:61px;text-align:right">0.0</i><i style="left:270px;width:61px;text-align:right">0.1</i><i style="left:334px;width:61px;text-align:right">0.2</i><i style="left:398px;width:61px;text-align:right">4.72</i><i style="left:462px;width:61px;text-align:right">24.23</i><i style="left:526px;width:61px;text-align:right">0.3</i><i style="left:590px;width:61px;text-align:right">71.2</i><i style="left:654px;width:61px;text-align:right">1</i><i class="c" style="left:718px;width:63px;text-align:center">Duty</i><i class="c" style="left:782px;width:63px;text-align:center">Duty</i><i class="c" style="left:846px;width:63px;text-align:center">Waste</i></div>
<div class="dr" style="top:368px"><i style="left:4px;width:74px;text-align:center">09:29</i><i style="left:78px;width:61px;text-align:right">107.9</i><i style="left:142px;width:61px;text-align:right">2.9</i><i style="left:206px;width:61px;text-align:right">0.0</i><i style="left:270px;width:61px;text-align:right">0.1</i><i style="left:334px;width:61px;text-align:right">0.2</i><i style="left:398px;width:61px;text-align:right">4.70</i><i style="left:462px;width:61px;text-align:right">23.90</i><i style="left:526px;width:61px;text-align:right">0.3</i><i style="left:590px;width:61px;text-align:right">71.0</i><i style="left:654px;width:61px;text-align:right">1</i><i class="c" style="left:718px;width:63px;text-align:center">Duty</i><i class="c" style="left:782px;width:63px;text-align:center">Duty</i><i class="c" style="left:846px;width:63px;text-align:center">Waste</i></div>
<div class="dr" style="top:380px"><i style="left:4px;width:74px;text-align:center">09:59</i><i style="left:78px;width:61px;text-align:right">113.0</i><i style="left:142px;width:61px;text-align:right">2.9</i><i style="left:206px;width:61px;text-align:right">0.0</i><i style="left:270px;width:61px;text-align:right">0.1</i><i style="left:334px;width:61px;text-align:right">0.2</i><i style="left:398px;width:61px;text-align:right">4.76</i><i style="left:462px;width:61px;text-align:right">24.04</i><i style="left:526px;width:61px;text-align:right">0.3</i><i style="left:590px;width:61px;text-align:right">71.0</i><i style="left:654px;width:61px;text-align:right">1</i><i class="c" style="left:718px;width:63px;text-align:center">Duty</i><i class="c" style="left:782px;width:63px;text-align:center">Duty</i><i class="c" style="left:846px;width:63px;text-align:center">Waste</i></div>
<div class="dr" style="top:392px"><i style="left:4px;width:74px;text-align:center">10:29</i><i style="left:78px;width:61px;text-align:right">112.1</i><i style="left:142px;width:61px;text-align:right">3.6</i><i style="left:206px;width:61px;text-align:right">0.0</i><i style="left:270px;width:61px;text-align:right">0.1</i><i style="left:334px;width:61px;text-align:right">0.2</i><i style="left:398px;width:61px;text-align:right">4.78</i><i style="left:462px;width:61px;text-align:right">23.75</i><i style="left:526px;width:61px;text-align:right">0.3</i><i style="left:590px;width:61px;text-align:right">70.9</i><i style="left:654px;width:61px;text-align:right">1</i><i class="c" style="left:718px;width:63px;text-align:center">Duty</i><i class="c" style="left:782px;width:63px;text-align:center">Duty</i><i class="c" style="left:846px;width:63px;text-align:center">Waste</i></div>
<div class="dr" style="top:404px"><i style="left:4px;width:74px;text-align:center">10:59</i><i style="left:78px;width:61px;text-align:right">105.5</i><i style="left:142px;width:61px;text-align:right">10.4</i><i style="left:206px;width:61px;text-align:right">0.0</i><i style="left:270px;width:61px;text-align:right">0.1</i><i style="left:334px;width:61px;text-align:right">0.3</i><i style="left:398px;width:61px;text-align:right">4.79</i><i style="left:462px;width:61px;text-align:right">24.16</i><i style="left:526px;width:61px;text-align:right">0.3</i><i style="left:590px;width:61px;text-align:right">71.0</i><i style="left:654px;width:61px;text-align:right">1</i><i class="c" style="left:718px;width:63px;text-align:center">Duty</i><i class="c" style="left:782px;width:63px;text-align:center">Duty</i><i class="c" style="left:846px;width:63px;text-align:center">Waste</i></div>
<div class="dr" style="top:416px"><i style="left:4px;width:74px;text-align:center">11:29</i><i style="left:78px;width:61px;text-align:right">104.6</i><i style="left:142px;width:61px;text-align:right">5.5</i><i style="left:206px;width:61px;text-align:right">0.0</i><i style="left:270px;width:61px;text-align:right">0.1</i><i style="left:334px;width:61px;text-align:right">0.2</i><i style="left:398px;width:61px;text-align:right">4.53</i><i style="left:462px;width:61px;text-align:right">24.44</i><i style="left:526px;width:61px;text-align:right">0.3</i><i style="left:590px;width:61px;text-align:right">71.4</i><i style="left:654px;width:61px;text-align:right">1</i><i class="c" style="left:718px;width:63px;text-align:center">Duty</i><i class="c" style="left:782px;width:63px;text-align:center">Duty</i><i class="c" style="left:846px;width:63px;text-align:center">Waste</i></div>
<div class="dr" style="top:428px"><i style="left:4px;width:74px;text-align:center">11:59</i><i style="left:78px;width:61px;text-align:right">115.9</i><i style="left:142px;width:61px;text-align:right">3.2</i><i style="left:206px;width:61px;text-align:right">0.0</i><i style="left:270px;width:61px;text-align:right">0.1</i><i style="left:334px;width:61px;text-align:right">0.2</i><i style="left:398px;width:61px;text-align:right">4.78</i><i style="left:462px;width:61px;text-align:right">24.58</i><i style="left:526px;width:61px;text-align:right">0.3</i><i style="left:590px;width:61px;text-align:right">71.5</i><i style="left:654px;width:61px;text-align:right">1</i><i class="c" style="left:718px;width:63px;text-align:center">Duty</i><i class="c" style="left:782px;width:63px;text-align:center">Duty</i><i class="c" style="left:846px;width:63px;text-align:center">Waste</i></div>
<div class="dr" style="top:440px"><i style="left:4px;width:74px;text-align:center">12:29</i><i style="left:78px;width:61px;text-align:right">111.2</i><i style="left:142px;width:61px;text-align:right">4.1</i><i style="left:206px;width:61px;text-align:right">0.0</i><i style="left:270px;width:61px;text-align:right">0.1</i><i style="left:334px;width:61px;text-align:right">0.2</i><i style="left:398px;width:61px;text-align:right">4.71</i><i style="left:462px;width:61px;text-align:right">24.16</i><i style="left:526px;width:61px;text-align:right">0.3</i><i style="left:590px;width:61px;text-align:right">71.4</i><i style="left:654px;width:61px;text-align:right">1</i><i class="c" style="left:718px;width:63px;text-align:center">Duty</i><i class="c" style="left:782px;width:63px;text-align:center">Duty</i><i class="c" style="left:846px;width:63px;text-align:center">Waste</i></div>
<div class="dr" style="top:452px"><i style="left:4px;width:74px;text-align:center">12:59</i><i style="left:78px;width:61px;text-align:right">104.3</i><i style="left:142px;width:61px;text-align:right">6.9</i><i style="left:206px;width:61px;text-align:right">0.0</i><i style="left:270px;width:61px;text-align:right">0.1</i><i style="left:334px;width:61px;text-align:right">0.2</i><i style="left:398px;width:61px;text-align:right">4.76</i><i style="left:462px;width:61px;text-align:right">24.68</i><i style="left:526px;width:61px;text-align:right">0.3</i><i style="left:590px;width:61px;text-align:right">71.6</i><i style="left:654px;width:61px;text-align:right">1</i><i class="c" style="left:718px;width:63px;text-align:center">Duty</i><i class="c" style="left:782px;width:63px;text-align:center">Duty</i><i class="c" style="left:846px;width:63px;text-align:center">Waste</i></div>
<div class="dr" style="top:464px"><i style="left:4px;width:74px;text-align:center">13:29</i><i style="left:78px;width:61px;text-align:right">109.9</i><i style="left:142px;width:61px;text-align:right">3.5</i><i style="left:206px;width:61px;text-align:right">0.0</i><i style="left:270px;width:61px;text-align:right">0.1</i><i style="left:334px;width:61px;text-align:right">0.2</i><i style="left:398px;width:61px;text-align:right">4.71</i><i style="left:462px;width:61px;text-align:right">24.13</i><i style="left:526px;width:61px;text-align:right">0.3</i><i style="left:590px;width:61px;text-align:right">71.3</i><i style="left:654px;width:61px;text-align:right">1</i><i class="c" style="left:718px;width:63px;text-align:center">Duty</i><i class="c" style="left:782px;width:63px;text-align:center">Duty</i><i class="c" style="left:846px;width:63px;text-align:center">Waste</i></div>
<div class="dr" style="top:476px"><i style="left:4px;width:74px;text-align:center">13:59</i><i style="left:78px;width:61px;text-align:right">110.7</i><i style="left:142px;width:61px;text-align:right">11.7</i><i style="left:206px;width:61px;text-align:right">0.0</i><i style="left:270px;width:61px;text-align:right">0.1</i><i style="left:334px;width:61px;text-align:right">0.3</i><i style="left:398px;width:61px;text-align:right">4.92</i><i style="left:462px;width:61px;text-align:right">24.13</i><i style="left:526px;width:61px;text-align:right">0.3</i><i style="left:590px;width:61px;text-align:right">71.4</i><i style="left:654px;width:61px;text-align:right">1</i><i class="c" style="left:718px;width:63px;text-align:center">Duty</i><i class="c" style="left:782px;width:63px;text-align:center">Duty</i><i class="c" style="left:846px;width:63px;text-align:center">Waste</i></div>
<div class="dr" style="top:488px"><i style="left:4px;width:74px;text-align:center">14:29</i><i style="left:78px;width:61px;text-align:right">105.0</i><i style="left:142px;width:61px;text-align:right">4.5</i><i style="left:206px;width:61px;text-align:right">0.0</i><i style="left:270px;width:61px;text-align:right">0.1</i><i style="left:334px;width:61px;text-align:right">0.2</i><i style="left:398px;width:61px;text-align:right">4.83</i><i style="left:462px;width:61px;text-align:right">24.13</i><i style="left:526px;width:61px;text-align:right">0.3</i><i style="left:590px;width:61px;text-align:right">71.1</i><i style="left:654px;width:61px;text-align:right">1</i><i class="c" style="left:718px;width:63px;text-align:center">Duty</i><i class="c" style="left:782px;width:63px;text-align:center">Duty</i><i class="c" style="left:846px;width:63px;text-align:center">Waste</i></div>
<div class="dr" style="top:500px"><i style="left:4px;width:74px;text-align:center">14:59</i><i style="left:78px;width:61px;text-align:right">113.3</i><i style="left:142px;width:61px;text-align:right">3.8</i><i style="left:206px;width:61px;text-align:right">0.0</i><i style="left:270px;width:61px;text-align:right">0.1</i><i style="left:334px;width:61px;text-align:right">0.2</i><i style="left:398px;width:61px;text-align:right">4.74</i><i style="left:462px;width:61px;text-align:right">24.41</i><i style="left:526px;width:61px;text-align:right">0.3</i><i style="left:590px;width:61px;text-align:right">71.7</i><i style="left:654px;width:61px;text-align:right">1</i><i class="c" style="left:718px;width:63px;text-align:center">Duty</i><i class="c" style="left:782px;width:63px;text-align:center">Stby</i><i class="c" style="left:846px;width:63px;text-align:center">Waste</i></div>
<div class="dr" style="top:512px"><i style="left:4px;width:74px;text-align:center">15:29</i><i style="left:78px;width:61px;text-align:right">119.3</i><i style="left:142px;width:61px;text-align:right">2.6</i><i style="left:206px;width:61px;text-align:right">0.0</i><i style="left:270px;width:61px;text-align:right">0.1</i><i style="left:334px;width:61px;text-align:right">0.2</i><i style="left:398px;width:61px;text-align:right">4.88</i><i style="left:462px;width:61px;text-align:right">23.42</i><i style="left:526px;width:61px;text-align:right">0.3</i><i style="left:590px;width:61px;text-align:right">70.7</i><i style="left:654px;width:61px;text-align:right">1</i><i class="c" style="left:718px;width:63px;text-align:center">Duty</i><i class="c" style="left:782px;width:63px;text-align:center">Stby</i><i class="c" style="left:846px;width:63px;text-align:center">Waste</i></div>
<div class="dr" style="top:524px"><i style="left:4px;width:74px;text-align:center">15:59</i><i style="left:78px;width:61px;text-align:right">96.5</i><i style="left:142px;width:61px;text-align:right">10.3</i><i style="left:206px;width:61px;text-align:right">0.0</i><i style="left:270px;width:61px;text-align:right">0.1</i><i style="left:334px;width:61px;text-align:right">0.3</i><i style="left:398px;width:61px;text-align:right">4.81</i><i style="left:462px;width:61px;text-align:right">23.28</i><i style="left:526px;width:61px;text-align:right">0.3</i><i style="left:590px;width:61px;text-align:right">70.3</i><i style="left:654px;width:61px;text-align:right">1</i><i class="c" style="left:718px;width:63px;text-align:center">Duty</i><i class="c" style="left:782px;width:63px;text-align:center">Duty</i><i class="c" style="left:846px;width:63px;text-align:center">Waste</i></div>
<div class="dr" style="top:536px"><i style="left:4px;width:74px;text-align:center">16:29</i><i style="left:78px;width:61px;text-align:right">106.6</i><i style="left:142px;width:61px;text-align:right">3.9</i><i style="left:206px;width:61px;text-align:right">0.0</i><i style="left:270px;width:61px;text-align:right">0.1</i><i style="left:334px;width:61px;text-align:right">0.2</i><i style="left:398px;width:61px;text-align:right">4.78</i><i style="left:462px;width:61px;text-align:right">23.61</i><i style="left:526px;width:61px;text-align:right">0.3</i><i style="left:590px;width:61px;text-align:right">70.6</i><i style="left:654px;width:61px;text-align:right">1</i><i class="c" style="left:718px;width:63px;text-align:center">Duty</i><i class="c" style="left:782px;width:63px;text-align:center">Duty</i><i class="c" style="left:846px;width:63px;text-align:center">Waste</i></div>
<div class="dr" style="top:548px"><i style="left:4px;width:74px;text-align:center">16:59</i><i style="left:78px;width:61px;text-align:right">113.9</i><i style="left:142px;width:61px;text-align:right">3.9</i><i style="left:206px;width:61px;text-align:right">0.0</i><i style="left:270px;width:61px;text-align:right">0.1</i><i style="left:334px;width:61px;text-align:right">0.2</i><i style="left:398px;width:61px;text-align:right">4.79</i><i style="left:462px;width:61px;text-align:right">22.81</i><i style="left:526px;width:61px;text-align:right">0.3</i><i style="left:590px;width:61px;text-align:right">70.0</i><i style="left:654px;width:61px;text-align:right">1</i><i class="c" style="left:718px;width:63px;text-align:center">Duty</i><i class="c" style="left:782px;width:63px;text-align:center">Duty</i><i class="c" style="left:846px;width:63px;text-align:center">Waste</i></div>
<div class="dr" style="top:560px"><i style="left:4px;width:74px;text-align:center">17:29</i><i style="left:78px;width:61px;text-align:right">109.4</i><i style="left:142px;width:61px;text-align:right">9.7</i><i style="left:206px;width:61px;text-align:right">0.0</i><i style="left:270px;width:61px;text-align:right">0.1</i><i style="left:334px;width:61px;text-align:right">0.3</i><i style="left:398px;width:61px;text-align:right">5.44</i><i style="left:462px;width:61px;text-align:right">22.57</i><i style="left:526px;width:61px;text-align:right">0.3</i><i style="left:590px;width:61px;text-align:right">69.4</i><i style="left:654px;width:61px;text-align:right">1</i><i class="c" style="left:718px;width:63px;text-align:center">Duty</i><i class="c" style="left:782px;width:63px;text-align:center">Duty</i><i class="c" style="left:846px;width:63px;text-align:center">Waste</i></div>
<div class="dr" style="top:572px"><i style="left:4px;width:74px;text-align:center">17:59</i><i style="left:78px;width:61px;text-align:right">103.9</i><i style="left:142px;width:61px;text-align:right">5.3</i><i style="left:206px;width:61px;text-align:right">0.0</i><i style="left:270px;width:61px;text-align:right">0.1</i><i style="left:334px;width:61px;text-align:right">0.2</i><i style="left:398px;width:61px;text-align:right">4.84</i><i style="left:462px;width:61px;text-align:right">23.31</i><i style="left:526px;width:61px;text-align:right">0.3</i><i style="left:590px;width:61px;text-align:right">70.3</i><i style="left:654px;width:61px;text-align:right">1</i><i class="c" style="left:718px;width:63px;text-align:center">Duty</i><i class="c" style="left:782px;width:63px;text-align:center">Duty</i><i class="c" style="left:846px;width:63px;text-align:center">Waste</i></div>
<div class="dr" style="top:584px"><i style="left:4px;width:74px;text-align:center">18:29</i><i style="left:78px;width:61px;text-align:right">101.1</i><i style="left:142px;width:61px;text-align:right">5.3</i><i style="left:206px;width:61px;text-align:right">0.0</i><i style="left:270px;width:61px;text-align:right">0.1</i><i style="left:334px;width:61px;text-align:right">0.2</i><i style="left:398px;width:61px;text-align:right">4.81</i><i style="left:462px;width:61px;text-align:right">24.14</i><i style="left:526px;width:61px;text-align:right">0.3</i><i style="left:590px;width:61px;text-align:right">71.1</i><i style="left:654px;width:61px;text-align:right">1</i><i class="c" style="left:718px;width:63px;text-align:center">Duty</i><i class="c" style="left:782px;width:63px;text-align:center">Duty</i><i class="c" style="left:846px;width:63px;text-align:center">Waste</i></div>
<div class="dr" style="top:596px"><i style="left:4px;width:74px;text-align:center">18:59</i><i style="left:78px;width:61px;text-align:right">102.5</i><i style="left:142px;width:61px;text-align:right">4.9</i><i style="left:206px;width:61px;text-align:right">0.0</i><i style="left:270px;width:61px;text-align:right">0.1</i><i style="left:334px;width:61px;text-align:right">0.2</i><i style="left:398px;width:61px;text-align:right">4.68</i><i style="left:462px;width:61px;text-align:right">24.18</i><i style="left:526px;width:61px;text-align:right">0.3</i><i style="left:590px;width:61px;text-align:right">71.3</i><i style="left:654px;width:61px;text-align:right">1</i><i class="c" style="left:718px;width:63px;text-align:center">Duty</i><i class="c" style="left:782px;width:63px;text-align:center">Duty</i><i class="c" style="left:846px;width:63px;text-align:center">Waste</i></div>
<div class="dr" style="top:608px"><i style="left:4px;width:74px;text-align:center">19:29</i><i style="left:78px;width:61px;text-align:right">118.2</i><i style="left:142px;width:61px;text-align:right">4.2</i><i style="left:206px;width:61px;text-align:right">0.0</i><i style="left:270px;width:61px;text-align:right">0.1</i><i style="left:334px;width:61px;text-align:right">0.2</i><i style="left:398px;width:61px;text-align:right">4.72</i><i style="left:462px;width:61px;text-align:right">24.81</i><i style="left:526px;width:61px;text-align:right">0.3</i><i style="left:590px;width:61px;text-align:right">72.0</i><i style="left:654px;width:61px;text-align:right">1</i><i class="c" style="left:718px;width:63px;text-align:center">Duty</i><i class="c" style="left:782px;width:63px;text-align:center">Duty</i><i class="c" style="left:846px;width:63px;text-align:center">Waste</i></div>
<div class="dr" style="top:620px"><i style="left:4px;width:74px;text-align:center">19:59</i><i style="left:78px;width:61px;text-align:right">110.3</i><i style="left:142px;width:61px;text-align:right">4.8</i><i style="left:206px;width:61px;text-align:right">0.0</i><i style="left:270px;width:61px;text-align:right">0.1</i><i style="left:334px;width:61px;text-align:right">0.2</i><i style="left:398px;width:61px;text-align:right">4.75</i><i style="left:462px;width:61px;text-align:right">24.21</i><i style="left:526px;width:61px;text-align:right">0.3</i><i style="left:590px;width:61px;text-align:right">71.5</i><i style="left:654px;width:61px;text-align:right">1</i><i class="c" style="left:718px;width:63px;text-align:center">Duty</i><i class="c" style="left:782px;width:63px;text-align:center">Duty</i><i class="c" style="left:846px;width:63px;text-align:center">Waste</i></div>
<div class="dr" style="top:632px"><i style="left:4px;width:74px;text-align:center">20:29</i><i style="left:78px;width:61px;text-align:right">116.6</i><i style="left:142px;width:61px;text-align:right">4.2</i><i style="left:206px;width:61px;text-align:right">0.0</i><i style="left:270px;width:61px;text-align:right">0.1</i><i style="left:334px;width:61px;text-align:right">0.2</i><i style="left:398px;width:61px;text-align:right">4.91</i><i style="left:462px;width:61px;text-align:right">24.36</i><i style="left:526px;width:61px;text-align:right">0.3</i><i style="left:590px;width:61px;text-align:right">71.7</i><i style="left:654px;width:61px;text-align:right">1</i><i class="c" style="left:718px;width:63px;text-align:center">Duty</i><i class="c" style="left:782px;width:63px;text-align:center">Duty</i><i class="c" style="left:846px;width:63px;text-align:center">Waste</i></div>
<div class="dr" style="top:644px"><i style="left:4px;width:74px;text-align:center">20:59</i><i style="left:78px;width:61px;text-align:right">109.5</i><i style="left:142px;width:61px;text-align:right">4.0</i><i style="left:206px;width:61px;text-align:right">0.0</i><i style="left:270px;width:61px;text-align:right">0.1</i><i style="left:334px;width:61px;text-align:right">0.2</i><i style="left:398px;width:61px;text-align:right">4.94</i><i style="left:462px;width:61px;text-align:right">24.47</i><i style="left:526px;width:61px;text-align:right">0.3</i><i style="left:590px;width:61px;text-align:right">71.6</i><i style="left:654px;width:61px;text-align:right">1</i><i class="c" style="left:718px;width:63px;text-align:center">Duty</i><i class="c" style="left:782px;width:63px;text-align:center">Duty</i><i class="c" style="left:846px;width:63px;text-align:center">Waste</i></div>
<div class="dr" style="top:656px"><i style="left:4px;width:74px;text-align:center">21:29</i><i style="left:78px;width:61px;text-align:right">101.7</i><i style="left:142px;width:61px;text-align:right">3.9</i><i style="left:206px;width:61px;text-align:right">0.0</i><i style="left:270px;width:61px;text-align:right">0.1</i><i style="left:334px;width:61px;text-align:right">0.2</i><i style="left:398px;width:61px;text-align:right">4.76</i><i style="left:462px;width:61px;text-align:right">24.53</i><i style="left:526px;width:61px;text-align:right">0.3</i><i style="left:590px;width:61px;text-align:right">71.7</i><i style="left:654px;width:61px;text-align:right">1</i><i class="c" style="left:718px;width:63px;text-align:center">Duty</i><i class="c" style="left:782px;width:63px;text-align:center">Duty</i><i class="c" style="left:846px;width:63px;text-align:center">Waste</i></div>
<div class="dr" style="top:668px"><i style="left:4px;width:74px;text-align:center">21:59</i><i style="left:78px;width:61px;text-align:right">104.8</i><i style="left:142px;width:61px;text-align:right">3.7</i><i style="left:206px;width:61px;text-align:right">0.0</i><i style="left:270px;width:61px;text-align:right">0.1</i><i style="left:334px;width:61px;text-align:right">0.2</i><i style="left:398px;width:61px;text-align:right">4.14</i><i style="left:462px;width:61px;text-align:right">23.88</i><i style="left:526px;width:61px;text-align:right">0.3</i><i style="left:590px;width:61px;text-align:right">63.1</i><i style="left:654px;width:61px;text-align:right">1</i><i class="c" style="left:718px;width:63px;text-align:center">Duty</i><i class="c" style="left:782px;width:63px;text-align:center">Duty</i><i class="c" style="left:846px;width:63px;text-align:center">Waste</i></div>
<div class="dr" style="top:680px"><i style="left:4px;width:74px;text-align:center">22:29</i><i style="left:78px;width:61px;text-align:right">104.8</i><i style="left:142px;width:61px;text-align:right">3.5</i><i style="left:206px;width:61px;text-align:right">0.0</i><i style="left:270px;width:61px;text-align:right">0.1</i><i style="left:334px;width:61px;text-align:right">0.2</i><i style="left:398px;width:61px;text-align:right">4.81</i><i style="left:462px;width:61px;text-align:right">24.16</i><i style="left:526px;width:61px;text-align:right">0.3</i><i style="left:590px;width:61px;text-align:right">71.4</i><i style="left:654px;width:61px;text-align:right">1</i><i class="c" style="left:718px;width:63px;text-align:center">Duty</i><i class="c" style="left:782px;width:63px;text-align:center">Duty</i><i class="c" style="left:846px;width:63px;text-align:center">Waste</i></div>
<div class="dr" style="top:692px"><i style="left:4px;width:74px;text-align:center">22:59</i><i style="left:78px;width:61px;text-align:right">108.4</i><i style="left:142px;width:61px;text-align:right">3.8</i><i style="left:206px;width:61px;text-align:right">0.0</i><i style="left:270px;width:61px;text-align:right">0.1</i><i style="left:334px;width:61px;text-align:right">0.2</i><i style="left:398px;width:61px;text-align:right">4.70</i><i style="left:462px;width:61px;text-align:right">24.45</i><i style="left:526px;width:61px;text-align:right">0.3</i><i style="left:590px;width:61px;text-align:right">71.4</i><i style="left:654px;width:61px;text-align:right">1</i><i class="c" style="left:718px;width:63px;text-align:center">Duty</i><i class="c" style="left:782px;width:63px;text-align:center">Stby</i><i class="c" style="left:846px;width:63px;text-align:center">Waste</i></div>
<div class="dr" style="top:704px"><i style="left:4px;width:74px;text-align:center">23:29</i><i style="left:78px;width:61px;text-align:right">105.6</i><i style="left:142px;width:61px;text-align:right">4.5</i><i style="left:206px;width:61px;text-align:right">0.0</i><i style="left:270px;width:61px;text-align:right">0.1</i><i style="left:334px;width:61px;text-align:right">0.2</i><i style="left:398px;width:61px;text-align:right">4.67</i><i style="left:462px;width:61px;text-align:right">23.92</i><i style="left:526px;width:61px;text-align:right">0.3</i><i style="left:590px;width:61px;text-align:right">70.9</i><i style="left:654px;width:61px;text-align:right">1</i><i class="c" style="left:718px;width:63px;text-align:center">Duty</i><i class="c" style="left:782px;width:63px;text-align:center">Stby</i><i class="c" style="left:846px;width:63px;text-align:center">Waste</i></div>
<div class="dr" style="top:716px"><i style="left:4px;width:74px;text-align:center">23:59</i><i style="left:78px;width:61px;text-align:right">112.6</i><i style="left:142px;width:61px;text-align:right">2.7</i><i style="left:206px;width:61px;text-align:right">0.0</i><i style="left:270px;width:61px;text-align:right">0.1</i><i style="left:334px;width:61px;text-align:right">0.2</i><i style="left:398px;width:61px;text-align:right">4.84</i><i style="left:462px;width:61px;text-align:right">24.55</i><i style="left:526px;width:61px;text-align:right">0.3</i><i style="left:590px;width:61px;text-align:right">71.5</i><i style="left:654px;width:61px;text-align:right">1</i><i class="c" style="left:718px;width:63px;text-align:center">Duty</i><i class="c" style="left:782px;width:63px;text-align:center">Duty</i><i class="c" style="left:846px;width:63px;text-align:center">Waste</i></div>
<div class="sr" style="top:728px"><i class="sl" style="left:3px;width:74px;text-align:center">Daily ELV</i><i class="sv" style="left:78px;width:61px;text-align:right">200</i><i class="sv" style="left:142px;width:61px;text-align:right">50</i><i class="sv" style="left:206px;width:61px;text-align:right">50</i><i class="sv" style="left:270px;width:61px;text-align:right">10</i><i class="sv" style="left:334px;width:61px;text-align:right">10</i><i class="sv" style="left:398px;width:61px;text-align:right">-</i><i class="sv" style="left:462px;width:61px;text-align:right">-</i><i class="sv" style="left:526px;width:61px;text-align:right">10</i><i class="sv" style="left:590px;width:61px;text-align:right">-</i><i class="sv" style="left:654px;width:61px;text-align:right">-</i></div>
<div class="sr" style="top:745px"><i class="sl" style="left:3px;width:74px;text-align:center">Average</i><i class="sv" style="left:78px;width:61px;text-align:right">109.08</i><i class="sv" style="left:142px;width:61px;text-align:right">4.97</i><i class="sv" style="left:206px;width:61px;text-align:right">0.00</i><i class="sv" style="left:270px;width:61px;text-align:right">0.11</i><i class="sv" style="left:334px;width:61px;text-align:right">0.21</i><i class="sv" style="left:398px;width:61px;text-align:right">4.76</i><i class="sv" style="left:462px;width:61px;text-align:right">24.14</i><i class="sv" style="left:526px;width:61px;text-align:right">0.28</i><i class="sv" style="left:590px;width:61px;text-align:right">71.04</i><i class="sv" style="left:654px;width:61px;text-align:right">1.00</i></div>
<div class="sr" style="top:762px"><i class="sl" style="left:3px;width:74px;text-align:center">Max.</i><i class="sv" style="left:78px;width:61px;text-align:right">123.7</i><i class="sv" style="left:142px;width:61px;text-align:right">25.1</i><i class="sv" style="left:206px;width:61px;text-align:right">0.0</i><i class="sv" style="left:270px;width:61px;text-align:right">0.1</i><i class="sv" style="left:334px;width:61px;text-align:right">0.5</i><i class="sv" style="left:398px;width:61px;text-align:right">5.44</i><i class="sv" style="left:462px;width:61px;text-align:right">24.96</i><i class="sv" style="left:526px;width:61px;text-align:right">0.3</i><i class="sv" style="left:590px;width:61px;text-align:right">72.0</i><i class="sv" style="left:654px;width:61px;text-align:right">1</i></div>
<div class="sr" style="top:779px"><i class="sl" style="left:3px;width:74px;text-align:center">Min.</i><i class="sv" style="left:78px;width:61px;text-align:right">96.5</i><i class="sv" style="left:142px;width:61px;text-align:right">2.4</i><i class="sv" style="left:206px;width:61px;text-align:right">0.0</i><i class="sv" style="left:270px;width:61px;text-align:right">0.0</i><i class="sv" style="left:334px;width:61px;text-align:right">0.2</i><i class="sv" style="left:398px;width:61px;text-align:right">4.14</i><i class="sv" style="left:462px;width:61px;text-align:right">22.57</i><i class="sv" style="left:526px;width:61px;text-align:right">0.3</i><i class="sv" style="left:590px;width:61px;text-align:right">63.1</i><i class="sv" style="left:654px;width:61px;text-align:right">1</i></div>
<div class="sr" style="top:796px"><i class="sl" style="left:3px;width:74px;text-align:center">30 min ELV</i><i class="sv" style="left:78px;width:61px;text-align:right">400</i><i class="sv" style="left:142px;width:61px;text-align:right">150</i><i class="sv" style="left:206px;width:61px;text-align:right">200</i><i class="sv" style="left:270px;width:61px;text-align:right">60</i><i class="sv" style="left:334px;width:61px;text-align:right">30</i><i class="sv" style="left:398px;width:61px;text-align:right">-</i><i class="sv" style="left:462px;width:61px;text-align:right">-</i><i class="sv" style="left:526px;width:61px;text-align:right">30</i><i class="sv" style="left:590px;width:61px;text-align:right">-</i><i class="sv" style="left:654px;width:61px;text-align:right">-</i></div>
<div class="sr" style="top:813px"><i class="sl" style="left:3px;width:74px;text-align:center">>ELV</i><i class="sv" style="left:78px;width:61px;text-align:right">0</i><i class="sv" style="left:142px;width:61px;text-align:right">-</i><i class="sv" style="left:206px;width:61px;text-align:right">0</i><i class="sv" style="left:270px;width:61px;text-align:right">0</i><i class="sv" style="left:334px;width:61px;text-align:right">0</i><i class="sv" style="left:398px;width:61px;text-align:right">-</i><i class="sv" style="left:462px;width:61px;text-align:right">-</i><i class="sv" style="left:526px;width:61px;text-align:right">0</i><i class="sv" style="left:590px;width:61px;text-align:right">-</i><i class="sv" style="left:654px;width:61px;text-align:right">-</i></div>
<div class="sr" style="top:830px"><i class="sl" style="left:3px;width:74px;text-align:center">Avail %</i><i class="sv" style="left:78px;width:61px;text-align:right">100.0</i><i class="sv" style="left:142px;width:61px;text-align:right">100.0</i><i class="sv" style="left:206px;width:61px;text-align:right">100.0</i><i class="sv" style="left:270px;width:61px;text-align:right">100.0</i><i class="sv" style="left:334px;width:61px;text-align:right">100.0</i><i class="sv" style="left:398px;width:61px;text-align:right">100.0</i><i class="sv" style="left:462px;width:61px;text-align:right">100.0</i><i class="sv" style="left:526px;width:61px;text-align:right">100.0</i><i class="sv" style="left:590px;width:61px;text-align:right">100.0</i><i class="sv" style="left:654px;width:61px;text-align:right">100.0</i></div>
<div class="sr" style="top:847px"><i class="sl" style="left:3px;width:74px;text-align:center">Invalid</i><i class="sv" style="left:78px;width:61px;text-align:right">0</i><i class="sv" style="left:142px;width:61px;text-align:right">0</i><i class="sv" style="left:206px;width:61px;text-align:right">0</i><i class="sv" style="left:270px;width:61px;text-align:right">0</i><i class="sv" style="left:334px;width:61px;text-align:right">0</i><i class="sv" style="left:398px;width:61px;text-align:right">0</i><i class="sv" style="left:462px;width:61px;text-align:right">0</i><i class="sv" style="left:526px;width:61px;text-align:right">0</i><i class="sv" style="left:590px;width:61px;text-align:right">0</i><i class="sv" style="left:654px;width:61px;text-align:right">0</i></div>
<div class="lg" style="top:864px"><i style="left:79px;color:#ff0000">RED = level above ELV. (only waste data</i><i style="left:288px;color:#ff8000">ORANGE and "I" = invalid data</i><i style="left:544px;color:#0898a8;font-size:9.6px">TEAL and "-" = unreportable data</i></div>
</body></html>
